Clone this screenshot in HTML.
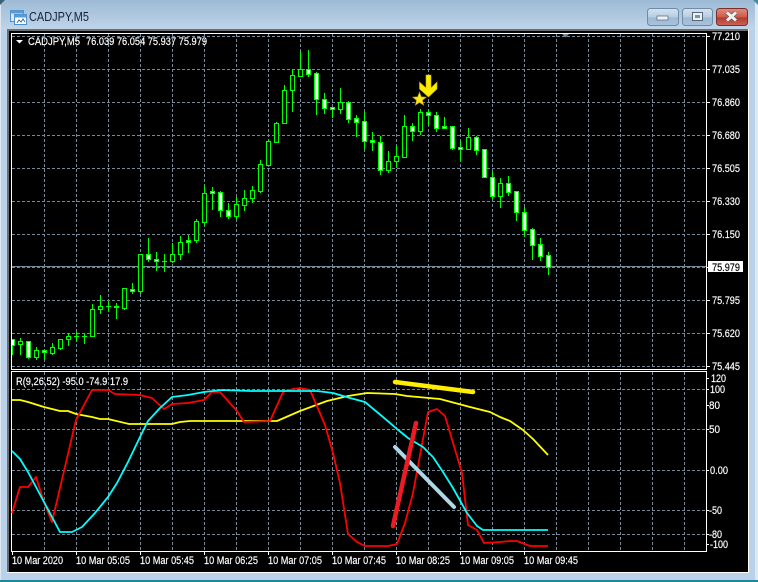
<!DOCTYPE html>
<html><head><meta charset="utf-8"><title>CADJPY,M5</title>
<style>html,body{margin:0;padding:0;background:#b9d1ea;width:758px;height:582px;overflow:hidden}svg{display:block}text{font-family:"Liberation Sans",sans-serif;font-size:11px;fill:#fff;stroke:#fff;stroke-width:.18px}</style></head>
<body>
<svg width="758" height="582" viewBox="0 0 758 582" xmlns="http://www.w3.org/2000/svg">
<defs>
<linearGradient id="t" x1="0" y1="0" x2="0" y2="1"><stop offset="0" stop-color="#9dbad5"/><stop offset="1" stop-color="#c0d5e9"/></linearGradient>
<linearGradient id="b" x1="0" y1="0" x2="0" y2="1"><stop offset="0" stop-color="#d5e3f0"/><stop offset=".5" stop-color="#b8cde2"/><stop offset=".55" stop-color="#9db9d3"/><stop offset="1" stop-color="#a9c3dc"/></linearGradient>
<linearGradient id="c" x1="0" y1="0" x2="0" y2="1"><stop offset="0" stop-color="#e08f80"/><stop offset=".5" stop-color="#cf5a4a"/><stop offset=".55" stop-color="#b53a2c"/><stop offset="1" stop-color="#c9665a"/></linearGradient>
<clipPath id="m"><rect x="12" y="34" width="694" height="335"/></clipPath>
</defs>
<rect width="758" height="582" fill="#b9d1ea"/>
<rect width="758" height="30" fill="url(#t)"/>
<rect x="0" y="0" width="1" height="582" fill="#dfe8ef"/>
<rect x="755" y="0" width="3" height="582" fill="#dfe8ef"/>
<path d="M0 0h5L0 5z" fill="#3f5f74"/>
<path d="M758 0h-5L758 5z" fill="#3f8f9f"/>
<rect x="0" y="580" width="758" height="2" fill="#1f8797"/>
<rect x="7" y="29" width="742" height="544" fill="#fff"/>
<rect x="7" y="29" width="741" height="543" fill="#000"/>
<path d="M7 30H748M8 29V572" stroke="#6d6d6d" stroke-width="2" fill="none"/>

<!-- title icon -->
<rect x="10.500" y="10.500" width="13" height="11" fill="#dbe9f7" stroke="#4f8fc9"/>
<rect x="10.500" y="10.500" width="13" height="3" fill="#5a9bd5"/>
<rect x="14.500" y="14.500" width="12" height="10" fill="#fff" stroke="#4f8fc9"/>
<rect x="14.500" y="14.500" width="12" height="3" fill="#5a9bd5"/>
<path d="M17 23l2-3 2 2 2-3 2 3" stroke="#2f6fb0" fill="none"/>
<text x="29" y="21" style="font-size:13px;fill:#12233a;stroke:none" textLength="60" lengthAdjust="spacingAndGlyphs">CADJPY,M5</text>

<!-- buttons -->
<rect x="647.500" y="8.500" width="31" height="17" rx="3" fill="url(#b)" stroke="#6f8ba5"/>
<rect x="657" y="16" width="11" height="4" fill="#eef2f6" stroke="#56687a" stroke-width=".7"/>
<rect x="682.500" y="8.500" width="30" height="17" rx="3" fill="url(#b)" stroke="#6f8ba5"/>
<rect x="692.500" y="12.500" width="10" height="8" fill="#eef2f6" stroke="#56687a"/>
<rect x="695" y="15" width="5" height="3" fill="#7f93a6"/>
<rect x="716.500" y="8.500" width="31" height="17" rx="3" fill="url(#c)" stroke="#7c2f2a"/>
<path d="M727 12.500l9 8M736 12.500l-9 8" stroke="#555" stroke-width="4.400"/>
<path d="M727 12.500l9 8M736 12.500l-9 8" stroke="#f2f2f2" stroke-width="3"/>

<!-- white frame -->
<g fill="none" stroke="#fff">
<path d="M11.500 33.500H706.500V369.500H11.500Z"/>
<path d="M11.500 371.500H706.500V551.500H11.500Z"/>
</g>

<!-- grid -->
<path fill="none" stroke="#778899" stroke-dasharray="3 2" d="M12 36.500H706M12 69.500H706M12 102.500H706M12 135.500H706M12 168.500H706M12 201.500H706M12 234.500H706M12 267.500H706M12 300.500H706M12 333.500H706M12 366.500H706M12 389.500H706M12 429.500H706M12 470.500H706M12 510.500H706M12 534.500H706
M44.500 34V369M44.500 372V551M76.500 34V369M76.500 372V551M108.500 34V369M108.500 372V551M140.500 34V369M140.500 372V551M172.500 34V369M172.500 372V551M204.500 34V369M204.500 372V551M236.500 34V369M236.500 372V551M268.500 34V369M268.500 372V551M300.500 34V369M300.500 372V551M332.500 34V369M332.500 372V551M364.500 34V369M364.500 372V551M396.500 34V369M396.500 372V551M428.500 34V369M428.500 372V551M460.500 34V369M460.500 372V551M492.500 34V369M492.500 372V551M524.500 34V369M524.500 372V551M556.500 34V369M556.500 372V551M588.500 34V369M588.500 372V551M620.500 34V369M620.500 372V551M652.500 34V369M652.500 372V551M684.500 34V369M684.500 372V551"/>
<path d="M12 266.500H706" stroke="#778899"/>

<!-- candles -->
<g clip-path="url(#m)" stroke="#00ff00">
<path fill="none" d="M12.500 339V355M20.500 338V355M28.500 341V359M36.500 347V360M44.500 349V360M52.500 343V355M60.500 339V350M68.500 333V346M76.500 332V342M84.500 334V344M92.500 304V337M100.500 295V314M108.500 301V311M116.500 303V319M124.500 288V310M132.500 283V294M140.500 254V294M148.500 238V262M156.500 252V271M164.500 254V272M172.500 243V263M180.500 236V260M188.500 235V253M196.500 219V243M204.500 186V226M212.500 187V210M220.500 191V217M228.500 203V219M236.500 197V219M244.500 190V211M252.500 186V203M260.500 160V193M268.500 140V166M276.500 122V143M284.500 85V124M292.500 69V112M300.500 51V76M308.500 50V77M316.500 72V115M324.500 93V114M332.500 107V118M340.500 88V114M348.500 101V123M356.500 115V137M364.500 111V149M372.500 132V151M380.500 136V175M388.500 151V173M396.500 146V168M404.500 115V157M412.500 123V141M420.500 109V135M428.500 109V125M436.500 112V132M444.500 117V128M452.500 126V150M460.500 141V161M468.500 128V149M476.500 136V155M484.500 149V177M492.500 172V199M500.500 178V208M508.500 176V196M516.500 191V221M524.500 207V237M532.500 228V260M540.500 238V261M548.500 252V275
M74 336.500h5M82 336.500h5M106 306.500h5M114 306.500h5M114 307.500h5M162 261.500h5"/>
<path fill="#000" d="M18.500 341.500h4v3h-4zM34.500 350.500h4v7h-4zM50.500 347.500h4v6h-4zM58.500 339.500h4v9h-4zM66.500 336.500h4v3h-4zM90.500 309.500h4v27h-4zM98.500 306.500h4v3h-4zM122.500 288.500h4v20h-4zM138.500 254.500h4v37h-4zM170.500 254.500h4v7h-4zM178.500 242.500h4v12h-4zM194.500 221.500h4v19h-4zM202.500 193.500h4v29h-4zM234.500 204.500h4v12h-4zM242.500 198.500h4v7h-4zM250.500 190.500h4v8h-4zM258.500 164.500h4v27h-4zM266.500 141.500h4v24h-4zM274.500 123.500h4v19h-4zM282.500 90.500h4v33h-4zM290.500 75.500h4v15h-4zM298.500 69.500h4v7h-4zM338.500 102.500h4v7h-4zM386.500 161.500h4v9h-4zM394.500 156.500h4v5h-4zM402.500 126.500h4v31h-4zM418.500 112.500h4v19h-4zM466.500 137.500h4v12h-4zM498.500 183.500h4v13h-4z"/>
<path fill="#fff" d="M10.500 339.500h4v6h-4zM26.500 341.500h4v16h-4zM42.500 350.500h4v2h-4zM130.500 289.500h4v2h-4zM146.500 254.500h4v5h-4zM154.500 259.500h4v2h-4zM186.500 240.500h4v2h-4zM210.500 191.500h4v2h-4zM218.500 192.500h4v18h-4zM226.500 210.500h4v6h-4zM306.500 69.500h4v5h-4zM314.500 73.500h4v26h-4zM322.500 99.500h4v9h-4zM330.500 107.500h4v2h-4zM346.500 102.500h4v17h-4zM354.500 118.500h4v4h-4zM362.500 121.500h4v20h-4zM370.500 140.500h4v2h-4zM378.500 142.500h4v28h-4zM410.500 126.500h4v5h-4zM426.500 112.500h4v3h-4zM434.500 115.500h4v13h-4zM442.500 126.500h4v2h-4zM450.500 126.500h4v22h-4zM458.500 147.500h4v2h-4zM474.500 137.500h4v13h-4zM482.500 149.500h4v28h-4zM490.500 177.500h4v19h-4zM506.500 183.500h4v9h-4zM514.500 191.500h4v21h-4zM522.500 212.500h4v18h-4zM530.500 229.500h4v16h-4zM538.500 244.500h4v12h-4zM546.500 255.500h4v12h-4z"/>
</g>

<!-- arrow & star -->
<path d="M426 75h5v13l6-6v7l-8.500 8-9-8v-7l6.500 6z" fill="#ffee00" stroke="#c8b400" stroke-width=".6"/>
<path d="M419.500 92l1.900 4.800 5.100.3-4 3.200 1.300 5-4.300-2.800-4.300 2.800 1.300-5-4-3.200 5.100-.3z" fill="#ffe81a" stroke="#a88a00" stroke-width=".6"/>

<!-- indicator lines -->
<g fill="none" stroke-width="1.800" stroke-linejoin="round">
<polyline stroke="#ffff00" points="12,400 20,400 28,402 44,407 60,411 68,411 76,414 92,417 100,419 108,419 129,424 148,424 172,424 180,422 190,421 250,421 277,421 300,411 327,401 348,396 367,393 395,394 407,396 440,399 470,407 490,412 500,417 510,421 523,430 533,439 548,455"/>
<polyline stroke="#ff0000" points="12,513 20,487 28,487 36,477 44,502 52,522 76,420 92,390 108,390 115,394 140,395 152,398 164,409 172,404 188,403 204,400 212,392 220,392 237,411 244,422 270,421 283,392 293,389 300,388 310,390 325,425 333,453 340,483 348,534 357,542 365,546 388,546 397,544 405,523 413,493 428,412 437,409 445,416 462,473 468,525 477,530 484,543 500,542 510,541 517,541 530,546 548,546"/>
<polyline stroke="#00ffff" points="12,451 20,459 28,472 44,502 60,532 72,532 82,527 95,513 108,497 117,483 128,462 140,437 148,421 160,408 172,397 188,395 204,392 222,390 250,391 317,391 333,393 350,398 365,402 383,417 397,429 408,438 423,447 433,457 443,472 453,488 467,513 477,526 483,530 548,530"/>
</g>
<!-- trend lines -->
<g stroke-linecap="round">
<path d="M395 382L473 392" stroke="#ffee00" stroke-width="4.500"/>
<path d="M395 447L454 507" stroke="#add8e6" stroke-width="4"/>
<path d="M393 526L416 423" stroke="#ed1c24" stroke-width="4.500"/>
</g>

<!-- ticks -->
<path stroke="#fff" d="M707 36.500h3M707 69.500h3M707 102.500h3M707 135.500h3M707 168.500h3M707 201.500h3M707 234.500h3M707 267.500h3M707 300.500h3M707 333.500h3M707 366.500h3M707 378.500h2M707 389.500h2M707 405.500h2M707 429.500h2M707 470.500h2M707 510.500h2M707 534.500h2M707 544.500h2M12.500 552v3M76.500 552v3M140.500 552v3M204.500 552v3M268.500 552v3M332.500 552v3M396.500 552v3M460.500 552v3M524.500 552v3"/>

<!-- header text -->
<path d="M16 40h7l-3.500 3.500z" fill="#fff"/>
<text x="28" y="45" textLength="52" lengthAdjust="spacingAndGlyphs">CADJPY,M5</text>
<text x="86" y="45" textLength="121" lengthAdjust="spacingAndGlyphs">76.039 76.054 75.937 75.979</text>
<text x="16" y="385" textLength="112" lengthAdjust="spacingAndGlyphs">R(9,26,52) -95.0 -74.9 17.9</text>

<!-- price labels -->
<g>
<text x="712" y="40" textLength="28" lengthAdjust="spacingAndGlyphs">77.210</text>
<text x="712" y="73" textLength="28" lengthAdjust="spacingAndGlyphs">77.035</text>
<text x="712" y="106" textLength="28" lengthAdjust="spacingAndGlyphs">76.860</text>
<text x="712" y="139" textLength="28" lengthAdjust="spacingAndGlyphs">76.680</text>
<text x="712" y="172" textLength="28" lengthAdjust="spacingAndGlyphs">76.505</text>
<text x="712" y="205" textLength="28" lengthAdjust="spacingAndGlyphs">76.330</text>
<text x="712" y="238" textLength="28" lengthAdjust="spacingAndGlyphs">76.150</text>
<text x="712" y="304" textLength="28" lengthAdjust="spacingAndGlyphs">75.795</text>
<text x="712" y="337" textLength="28" lengthAdjust="spacingAndGlyphs">75.620</text>
<text x="712" y="370" textLength="28" lengthAdjust="spacingAndGlyphs">75.445</text>
</g>
<rect x="708" y="261" width="35" height="11" fill="#fff"/>
<text x="712" y="271" style="fill:#000;stroke:#000" textLength="28" lengthAdjust="spacingAndGlyphs">75.979</text>

<!-- indicator labels -->
<g>
<text x="711" y="382" textLength="15" lengthAdjust="spacingAndGlyphs">120</text>
<text x="710" y="393" textLength="15" lengthAdjust="spacingAndGlyphs">100</text>
<text x="709" y="409" textLength="11" lengthAdjust="spacingAndGlyphs">80</text>
<text x="709" y="433" textLength="11" lengthAdjust="spacingAndGlyphs">50</text>
<text x="710" y="474" textLength="18" lengthAdjust="spacingAndGlyphs">0.00</text>
<text x="709" y="514" textLength="13" lengthAdjust="spacingAndGlyphs">-50</text>
<text x="709" y="538" textLength="13" lengthAdjust="spacingAndGlyphs">-80</text>
<text x="710" y="548" textLength="18" lengthAdjust="spacingAndGlyphs">-100</text>
</g>

<!-- time labels -->
<g>
<text x="12" y="564" textLength="51" lengthAdjust="spacingAndGlyphs">10 Mar 2020</text>
<text x="76" y="564" textLength="54" lengthAdjust="spacingAndGlyphs">10 Mar 05:05</text>
<text x="140" y="564" textLength="54" lengthAdjust="spacingAndGlyphs">10 Mar 05:45</text>
<text x="204" y="564" textLength="54" lengthAdjust="spacingAndGlyphs">10 Mar 06:25</text>
<text x="268" y="564" textLength="54" lengthAdjust="spacingAndGlyphs">10 Mar 07:05</text>
<text x="332" y="564" textLength="54" lengthAdjust="spacingAndGlyphs">10 Mar 07:45</text>
<text x="396" y="564" textLength="54" lengthAdjust="spacingAndGlyphs">10 Mar 08:25</text>
<text x="460" y="564" textLength="54" lengthAdjust="spacingAndGlyphs">10 Mar 09:05</text>
<text x="524" y="564" textLength="54" lengthAdjust="spacingAndGlyphs">10 Mar 09:45</text>
</g>
<path d="M562 34h7l-3.500 3.500z" fill="#778899"/>
</svg>
</body></html>
